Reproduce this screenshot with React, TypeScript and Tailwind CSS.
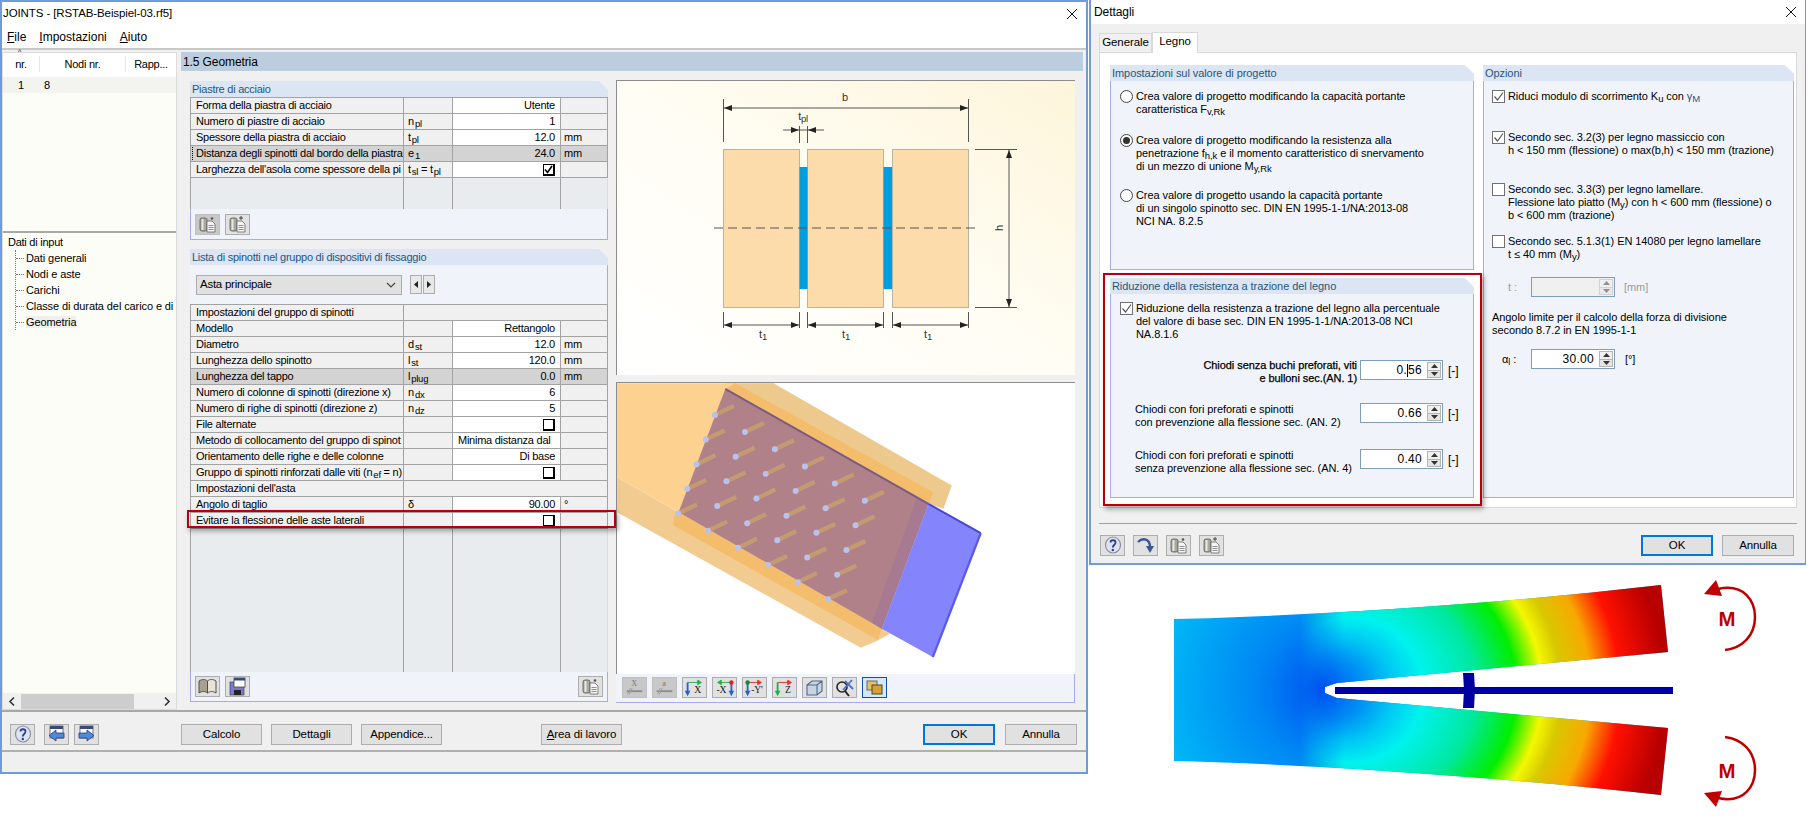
import type { ReactNode } from 'react'

type Row = {
  label: ReactNode
  sym?: ReactNode
  value?: ReactNode
  unit?: string
  kind?: 'section' | 'gray' | 'focus' | 'left'
}

const S = ({ b, s }: { b: string; s: string }) => (
  <span>
    {b}
    <span className="ml-[1px] text-[9.5px] relative top-[2px]">{s}</span>
  </span>
)

function Tick({ checked, soft }: { checked?: boolean; soft?: boolean }) {
  if (soft) {
    return (
      <span className="w-[13px] h-[13px] shrink-0 border border-[#707070] bg-white flex items-center justify-center">
        {checked && (
          <svg width="11" height="11" viewBox="0 0 11 11">
            <path d="M1.5 5.5 L4.5 9 L10 1.5" fill="none" stroke="#555" strokeWidth="1.2" />
          </svg>
        )}
      </span>
    )
  }
  return (
    <span className="w-[12px] h-[12px] border border-black border-r-2 border-b-2 bg-white flex items-center justify-center">
      {checked && (
        <svg width="9" height="9" viewBox="0 0 9 9">
          <path d="M1 4.5 L3.5 7.5 L8 1" fill="none" stroke="#000" strokeWidth="1.6" />
        </svg>
      )}
    </span>
  )
}

function Cylinder({ plus }: { plus?: boolean }) {
  return (
    <svg width="21" height="19" viewBox="0 0 21 19">
      <rect x="3" y="3" width="7" height="13" rx="2" fill="#a8a8a0" stroke="#555" strokeWidth="0.8" />
      <rect x="4.5" y="4" width="2" height="11" fill="#e8e8e0" />
      <path d="M10 6 h5 l3 3 v8 h-8 z" fill="#f4f4f4" stroke="#666" strokeWidth="0.8" />
      <path d="M11.5 10.5 h5 M11.5 12.5 h5 M11.5 14.5 h5" stroke="#777" strokeWidth="0.8" />
      {plus && <path d="M14 1 v4 M12 3 h4" stroke="#444" strokeWidth="1" />}
      {!plus && <circle cx="15" cy="3.5" r="1.3" fill="#555" />}
    </svg>
  )
}

function Help() {
  return (
    <svg width="21" height="19" viewBox="0 0 21 19">
      <ellipse cx="11" cy="9" rx="7.5" ry="8" fill="#dfe3f0" stroke="#8890a8" strokeWidth="1.2" />
      <path d="M8.5 6.5 C8.5 3.5 13.5 3.5 13.5 6.5 C13.5 9 10.8 9 10.8 11.5" fill="none" stroke="#2c3f90" strokeWidth="1.8" />
      <circle cx="10.8" cy="14" r="1.2" fill="#2c3f90" />
    </svg>
  )
}

function WinArrow({ right }: { right?: boolean }) {
  return (
    <svg width="21" height="19" viewBox="0 0 21 19">
      <rect x="4" y="1" width="13" height="12" fill="#fff" stroke="#555" strokeWidth="0.8" />
      <rect x="4" y="1" width="13" height="3" fill="#3a4a78" />
      {right ? (
        <path d="M3 8 h8 v-3 l7 5.5 -7 5.5 v-3 h-8 z" fill="#4d8bd8" stroke="#243c80" strokeWidth="0.8" />
      ) : (
        <path d="M18 8 h-8 v-3 l-7 5.5 7 5.5 v-3 h8 z" fill="#4d8bd8" stroke="#243c80" strokeWidth="0.8" />
      )}
    </svg>
  )
}

function Book() {
  return (
    <svg width="21" height="19" viewBox="0 0 21 19">
      <path d="M2 4 C5 2 8 2 10.5 4 V16 C8 14 5 14 2 16 z" fill="#a8a090" stroke="#444" strokeWidth="0.9" />
      <path d="M19 4 C16 2 13 2 10.5 4 V16 C13 14 16 14 19 16 z" fill="#e8e4d4" stroke="#444" strokeWidth="0.9" />
    </svg>
  )
}

function Floppy() {
  return (
    <svg width="21" height="19" viewBox="0 0 21 19">
      <rect x="3" y="5" width="14" height="13" fill="#7a78d0" stroke="#444" strokeWidth="0.7" />
      <rect x="7" y="13" width="7" height="5" fill="#222" />
      <rect x="7" y="1" width="11" height="9" fill="#fff" stroke="#444" strokeWidth="0.8" />
      <rect x="7" y="1" width="11" height="2.5" fill="#3a4a78" />
    </svg>
  )
}

function Curve() {
  return (
    <svg width="21" height="19" viewBox="0 0 21 19">
      <path d="M3 6 C8 1 15 3 15 11" fill="none" stroke="#3a5590" strokeWidth="2.4" />
      <path d="M11 10 L15 17 L19 10 z" fill="#3a5590" />
    </svg>
  )
}

function LetterBeam({ t }: { t: string }) {
  return (
    <svg width="25" height="21" viewBox="0 0 25 21">
      <text x="12" y="9" fontSize="9" textAnchor="middle" fontFamily="Liberation Serif, serif" fill="#777">
        {t}
      </text>
      <path d="M4 14.5 H21" stroke="#8c8c8c" strokeWidth="2" />
      <path d="M8 11 L5 18 M10 11 L7 18" stroke="#9c9c9c" strokeWidth="1" />
    </svg>
  )
}

function AxisIcon({
  label,
  labelX,
  horiz,
  horizColor,
  down,
  downColor,
  dot,
}: {
  label: string
  labelX: number
  horiz: string
  horizColor: string
  down: number
  downColor: string
  dot?: [number, string]
}) {
  return (
    <svg width="25" height="21" viewBox="0 0 25 21">
      <path d={horiz} fill={horizColor} stroke={horizColor} strokeWidth="1" />
      <path d={`M${down} 5 V15`} stroke={downColor} strokeWidth="2" />
      <path d={`M${down} 20 l-3 -6 h6 z`} fill={downColor} />
      {dot && <circle cx={dot[0]} cy="5" r="2.4" fill={dot[1]} />}
      <text x={labelX} y="17" fontSize="10.5" textAnchor="middle" fontFamily="Liberation Serif, serif" fill="#222">
        {label}
      </text>
    </svg>
  )
}

function IconBtn({
  children,
  off,
  active,
}: {
  children: ReactNode
  off?: boolean
  active?: boolean
}) {
  return (
    <span
      className={`w-[25px] h-[21px] shrink-0 flex items-center justify-center border ${
        active
          ? 'border-[#0a55a8] bg-[#d4e8f8]'
          : off
            ? 'border-[#c0c0c0] bg-[#c8c8c8]'
            : 'border-[#adadad] bg-[#e1e1e1]'
      }`}
    >
      {children}
    </span>
  )
}

function Btn({ children, w, active }: { children: ReactNode; w: string; active?: boolean }) {
  return (
    <span
      className={`${w} h-[21px] flex items-center justify-center bg-[#e1e1e1] text-[11.5px] tracking-[-0.1px] text-black ${
        active ? 'border-2 border-[#0078d7]' : 'border border-[#adadad]'
      }`}
    >
      {children}
    </span>
  )
}

function GroupHead({ title, narrow }: { title: string; narrow?: boolean }) {
  return (
    <div
      className={`h-4 shrink-0 bg-[#dbe5f4] text-[#28567a] flex items-center pl-[2px] [clip-path:polygon(0_0,calc(100%-9px)_0,100%_9px,100%_100%,0_100%)] ${
        narrow ? 'text-[11px] tracking-[-0.25px]' : 'text-[11px] tracking-[-0.07px]'
      }`}
    >
      {title}
    </div>
  )
}

const cols = 'grid grid-cols-[214px_49px_108px_47px]'
const line = 'border-r border-b border-[#a3a3a3]'

function TableRow({ row }: { row: Row }) {
  const rowBg =
    row.kind === 'gray' || row.kind === 'focus' ? 'bg-[#d3d3d3]' : 'bg-[#f0f0f0]'
  if (row.kind === 'section') {
    return (
      <div className={`${cols} h-4 bg-[#f0f0f0]`}>
        <div className={`${line} border-l pl-[5px] leading-[15px] whitespace-nowrap overflow-hidden`}>{row.label}</div>
        <div className={`${line} col-span-3`} />
      </div>
    )
  }
  return (
    <div className={`${cols} h-4 ${rowBg}`}>
      <div className={`${line} border-l pl-[5px] leading-[15px] whitespace-nowrap overflow-hidden`}>
        {row.kind === 'focus' ? (
          <span className="outline-1 outline-dotted outline-black -ml-[3px] pl-[3px] pr-[3px] block">{row.label}</span>
        ) : (
          row.label
        )}
      </div>
      <div className={`${line} pl-[4px] leading-[15px] whitespace-nowrap overflow-hidden`}>{row.sym}</div>
      <div
        className={`${line} leading-[15px] flex items-center ${
          row.kind === 'left' ? 'pl-[5px]' : 'justify-end pr-[5px]'
        } ${row.kind === 'gray' || row.kind === 'focus' ? '' : 'bg-white'}`}
      >
        {row.value}
      </div>
      <div className={`${line} pl-[3px] leading-[15px]`}>{row.unit}</div>
    </div>
  )
}

function EmptyRows() {
  return (
    <div className={`${cols} flex-1 bg-[#e9ecee]`}>
      <div className="border-l border-r border-[#a3a3a3]" />
      <div className="border-r border-[#a3a3a3]" />
      <div className="border-r border-[#a3a3a3]" />
      <div className="border-r border-[#dcdcdc]" />
    </div>
  )
}

const plateRows: Row[] = [
  { label: 'Forma della piastra di acciaio', value: 'Utente' },
  { label: 'Numero di piastre di acciaio', sym: <S b="n" s="pl" />, value: '1' },
  { label: 'Spessore della piastra di acciaio', sym: <S b="t" s="pl" />, value: '12.0', unit: 'mm' },
  { label: 'Distanza degli spinotti dal bordo della piastra', sym: <S b="e" s="1" />, value: '24.0', unit: 'mm', kind: 'focus' },
  {
    label: "Larghezza dell'asola come spessore della pi",
    sym: (
      <span>
        <S b="t" s="sl" /> = <S b="t" s="pl" />
      </span>
    ),
    value: <Tick checked />,
  },
]

const dowelRows: Row[] = [
  { label: 'Impostazioni del gruppo di spinotti', kind: 'section' },
  { label: 'Modello', value: 'Rettangolo' },
  { label: 'Diametro', sym: <S b="d" s="st" />, value: '12.0', unit: 'mm' },
  { label: 'Lunghezza dello spinotto', sym: <S b="l" s="st" />, value: '120.0', unit: 'mm' },
  { label: 'Lunghezza del tappo', sym: <S b="l" s="plug" />, value: '0.0', unit: 'mm', kind: 'gray' },
  { label: 'Numero di colonne di spinotti (direzione x)', sym: <S b="n" s="dx" />, value: '6' },
  { label: 'Numero di righe di spinotti (direzione z)', sym: <S b="n" s="dz" />, value: '5' },
  { label: 'File alternate', value: <Tick /> },
  { label: 'Metodo di collocamento del gruppo di spinot', value: 'Minima distanza dal', kind: 'left' },
  { label: 'Orientamento delle righe e delle colonne', value: 'Di base' },
  { label: <span>Gruppo di spinotti rinforzati dalle viti (<S b="n" s="ef" /> = n)</span>, value: <Tick /> },
  { label: "Impostazioni dell'asta", kind: 'section' },
  { label: 'Angolo di taglio', sym: 'δ', value: '90.00', unit: '°' },
  { label: 'Evitare la flessione delle aste laterali', value: <Tick /> },
]

function Sketch() {
  return (
    <svg width="458" height="294" viewBox="617 81 458 294" className="block">
      <g fill="#fddcab" stroke="#bdb3a2" strokeWidth="1">
        <rect x="723.5" y="149.5" width="76" height="158" />
        <rect x="807.5" y="149.5" width="76" height="158" />
        <rect x="892.5" y="149.5" width="76" height="158" />
      </g>
      <rect x="799.5" y="167" width="8" height="122" fill="#009ee0" />
      <rect x="883.5" y="167" width="8.5" height="122" fill="#009ee0" />
      <g stroke="#555" strokeWidth="1" fill="none">
        <path d="M714 228 H977" strokeDasharray="9 5" />
        <path d="M723.5 99 V142 M968.5 99 V142 M723.5 108 H968.5" />
        <path d="M799.5 126 V143 M807.5 126 V143 M783 130 H824" />
        <path d="M975 149.5 H1017 M975 307.5 H1017 M1009 149.5 V307.5" />
        <path d="M723.5 312 V328 M799.5 312 V328 M807.5 312 V328 M883.5 312 V328 M892.5 312 V328 M968.5 312 V328" />
        <path d="M723.5 325 H799.5 M807.5 325 H883.5 M892.5 325 H968.5" />
      </g>
      <g fill="#222">
        <path d="M724 108 l8 -3 v6 z M968 108 l-8 -3 v6 z" />
        <path d="M799 130 l-8 -3 v6 z M808 130 l8 -3 v6 z" />
        <path d="M1009 150 l-3 8 h6 z M1009 307 l-3 -8 h6 z" />
        <path d="M724 325 l8 -3 v6 z M799 325 l-8 -3 v6 z M808 325 l8 -3 v6 z M883 325 l-8 -3 v6 z M893 325 l8 -3 v6 z M968 325 l-8 -3 v6 z" />
      </g>
      <g fontFamily="Liberation Sans, sans-serif" fontSize="11" fill="#333" textAnchor="middle">
        <text x="845" y="101">b</text>
        <text x="803" y="120">t<tspan fontSize="9.5" dy="2">pl</tspan></text>
        <text x="763" y="338">t<tspan fontSize="9.5" dy="2">1</tspan></text>
        <text x="846" y="338">t<tspan fontSize="9.5" dy="2">1</tspan></text>
        <text x="928" y="338">t<tspan fontSize="9.5" dy="2">1</tspan></text>
        <text x="0" y="0" transform="translate(1003 228) rotate(-90)">h</text>
      </g>
    </svg>
  )
}

function Model3D() {
  const pins: [number, number][] = []
  for (let i = 0; i < 6; i++) {
    for (let j = 0; j < 5; j++) {
      pins.push([314 + i * 90 - j * 27.7, 133 + i * 51.5 + j * 74])
    }
  }
  return (
    <svg width="458" height="291" viewBox="20 38 1375 872" className="block">
      <path d="M345 38 H490 L1025 345 L1000 415 L955 400 Z" fill="#eec98e" />
      <path d="M20 320 L205 425 L815 775 L840 790 L800 812 L752 832 L20 425 Z" fill="#f1cb90" />
      <path d="M20 38 H375 L215 430 L20 320 Z" fill="#fdd290" />
      <path d="M190 440 L205 425 L815 775 L803 808 L190 465 Z" fill="#f3bd6c" />
      <path d="M345 55 L375 38 L970 365 L955 400 Z" fill="#f3bd6c" />
      <path d="M345 55 L955 400 L815 775 L205 425 Z" fill="#b08189" />
      <path d="M920 382 L955 400 L815 775 L785 757 Z" fill="#a87a92" />
      <path d="M955 400 L1112 488 L968 860 L815 775 Z" fill="#8484fc" />
      <path d="M345 55 L955 400" stroke="#7a5a82" strokeWidth="6" />
      <path d="M955 400 L1112 488" stroke="#4848d0" strokeWidth="6" />
      <path d="M1112 488 L968 860" stroke="#5a5ae4" strokeWidth="7" />
      {pins.map(([x, y]) => (
        <g key={`${x}-${y}`}>
          <path d={`M${x} ${y} l57 -27`} stroke="#c59a72" strokeWidth="13" />
          <circle cx={x} cy={y} r="9" fill="#b9c2ee" />
        </g>
      ))}
    </svg>
  )
}

function SpinBox({
  value,
  off,
  wide,
  caret,
}: {
  value?: ReactNode
  off?: boolean
  wide?: boolean
  caret?: boolean
}) {
  return (
    <span
      className={`${wide ? 'w-[84px]' : 'w-[83px]'} h-5 shrink-0 border border-[#7f9db9] flex items-center ${
        off ? 'bg-[#f0f0f0]' : 'bg-white'
      }`}
    >
      <span className="flex-1 text-right pr-[5px] text-[12px] tracking-[0.3px]">
        {caret ? (
          <>
            0.<span className="inline-block w-px h-[13px] bg-black align-middle" />56
          </>
        ) : (
          value
        )}
      </span>
      <span className={`w-[14px] h-[16px] mr-[1px] flex flex-col border border-[#b5b5b5] ${off ? 'opacity-50' : ''}`}>
        <span className="flex-1 flex items-center justify-center bg-[#f0f0f0]">
          <svg width="7" height="4" viewBox="0 0 7 4">
            <path d="M3.5 0 L7 4 H0 Z" fill="#333" />
          </svg>
        </span>
        <span className="flex-1 flex items-center justify-center bg-[#e4e4e4] border-t border-[#b5b5b5]">
          <svg width="7" height="4" viewBox="0 0 7 4">
            <path d="M3.5 4 L7 0 H0 Z" fill="#333" />
          </svg>
        </span>
      </span>
    </span>
  )
}

function Radio({ on }: { on?: boolean }) {
  return (
    <span className="w-[13px] h-[13px] rounded-full border border-[#444] bg-white shrink-0 flex items-center justify-center">
      {on && <span className="w-[7px] h-[7px] rounded-full bg-[#333]" />}
    </span>
  )
}

function RadioOption({ on, children, cls }: { on?: boolean; children: ReactNode; cls?: string }) {
  return (
    <div className={`flex gap-[3px] ${cls ?? ''}`}>
      <Radio on={on} />
      <div className="leading-[13px] whitespace-nowrap">{children}</div>
    </div>
  )
}

function CheckOption({ on, children, cls }: { on?: boolean; children: ReactNode; cls?: string }) {
  return (
    <div className={`flex gap-[3px] ${cls ?? ''}`}>
      <Tick soft checked={on} />
      <div className="leading-[13px] whitespace-nowrap">{children}</div>
    </div>
  )
}

function SpinRow({
  label,
  value,
  right,
  cls,
  caret,
}: {
  label: ReactNode
  value?: string
  right?: boolean
  cls: string
  caret?: boolean
}) {
  return (
    <div className={`flex items-start pl-[24px] ${cls}`}>
      <div className={`w-[222px] leading-[13px] whitespace-nowrap ${right ? 'text-right mt-[-1px] [-webkit-text-stroke:0.25px_black]' : ''}`}>
        {label}
      </div>
      <span className="ml-[3px]">
        <SpinBox value={value} caret={caret} />
      </span>
      <span className="ml-[5px] mt-[2px] text-[12px]">[-]</span>
    </div>
  )
}

function Details() {
  return (
    <div className="w-[717px] h-[565px] ml-[1px] flex flex-col bg-[#f0f0f0] border-l-2 border-b-2 border-r border-[#6f9bd8] text-[11px] tracking-[-0.07px] text-black">
      <div className="h-6 shrink-0 bg-white pl-[3px] pr-[9px] flex items-center justify-between text-[12px]">
        Dettagli
        <svg width="10" height="10" viewBox="0 0 10 10">
          <path d="M0 0 L10 10 M10 0 L0 10" stroke="#111" strokeWidth="1" />
        </svg>
      </div>
      <div className="flex px-[8px] pt-[8px] text-[11.5px] leading-none">
        <span className="w-[53px] h-[19px] mt-[1px] bg-[#f0f0f0] border border-b-0 border-[#d9d9d9] flex items-center justify-center">Generale</span>
        <span className="w-[46px] h-[21px] -mb-px z-10 bg-white border border-b-0 border-[#d9d9d9] flex items-center justify-center pb-[3px]">Legno</span>
      </div>
      <div className="mx-[8px] h-[456px] bg-white border border-[#d9d9d9] pt-[12px] pl-[10px] flex gap-[9px]">
        <div className="w-[364px] flex flex-col gap-[8px]">
          <div className="h-[205px] flex flex-col">
            <GroupHead title="Impostazioni sul valore di progetto" />
            <div className="flex-1 bg-[#f0f4fa] border-r border-b border-l border-[#a9a9ee] pt-[9px] pl-[9px]">
              <RadioOption>
                Crea valore di progetto modificando la capacità portante
                <br />
                caratteristica F<sub className="text-[9.5px]">v,Rk</sub>
              </RadioOption>
              <RadioOption on cls="mt-[18px]">
                Crea valore di progetto modificando la resistenza alla
                <br />
                penetrazione f<sub className="text-[9.5px]">h,k</sub> e il momento caratteristico di snervamento
                <br />
                di un mezzo di unione M<sub className="text-[9.5px]">y,Rk</sub>
              </RadioOption>
              <RadioOption cls="mt-[16px]">
                Crea valore di progetto usando la capacità portante
                <br />
                di un singolo spinotto sec. DIN EN 1995-1-1/NA:2013-08
                <br />
                NCI NA. 8.2.5
              </RadioOption>
            </div>
          </div>
          <div className="h-[220px] flex flex-col relative">
            <GroupHead title="Riduzione della resistenza a trazione del legno" />
            <div className="flex-1 bg-[#f0f4fa] border-r border-b border-l border-[#a9a9ee] pt-[8px] pl-[9px]">
              <CheckOption on>
                Riduzione della resistenza a trazione del legno alla percentuale
                <br />
                del valore di base sec. DIN EN 1995-1-1/NA:2013-08 NCI
                <br />
                NA.8.1.6
              </CheckOption>
              <SpinRow
                right
                caret
                cls="mt-[19px] -ml-[9px]"
                label={
                  <>
                    Chiodi senza buchi preforati, viti
                    <br />e bulloni sec.(AN. 1)
                  </>
                }
              />
              <SpinRow
                cls="mt-[18px] -ml-[9px]"
                value="0.66"
                label={
                  <>
                    Chiodi con fori preforati e spinotti
                    <br />
                    con prevenzione alla flessione sec. (AN. 2)
                  </>
                }
              />
              <SpinRow
                cls="mt-[20px] -ml-[9px]"
                value="0.40"
                label={
                  <>
                    Chiodi con fori preforati e spinotti
                    <br />
                    senza prevenzione alla flessione sec. (AN. 4)
                  </>
                }
              />
            </div>
            <div className="absolute -left-[7px] -top-[5px] w-[379px] h-[233px] border-2 border-[#b8000c] shadow-[2px_3px_5px_rgba(0,0,0,0.35)]" />
          </div>
        </div>
        <div className="w-[311px] h-[433px] flex flex-col">
          <GroupHead title="Opzioni" />
          <div className="flex-1 bg-[#f0f4fa] border-r border-b border-l border-[#a9a9ee] pt-[9px] pl-[8px]">
            <CheckOption on>
              Riduci modulo di scorrimento K<sub className="text-[9.5px]">u</sub> con <span className="text-[#28567a]">γ</span>
              <sub className="text-[9.5px] text-[#28567a]">M</sub>
            </CheckOption>
            <CheckOption on cls="mt-[28px]">
              Secondo sec. 3.2(3) per legno massiccio con
              <br />h &lt; 150 mm (flessione) o max(b,h) &lt; 150 mm (trazione)
            </CheckOption>
            <CheckOption cls="mt-[26px]">
              Secondo sec. 3.3(3) per legno lamellare.
              <br />
              Flessione lato piatto (M<sub className="text-[9.5px]">y</sub>) con h &lt; 600 mm (flessione) o
              <br />b &lt; 600 mm (trazione)
            </CheckOption>
            <CheckOption cls="mt-[13px]">
              Secondo sec. 5.1.3(1) EN 14080 per legno lamellare
              <br />t ≤ 40 mm (M<sub className="text-[9.5px]">y</sub>)
            </CheckOption>
            <div className="flex items-center mt-[16px] text-[#9a9a9a]">
              <span className="w-[39px] pl-[16px]">t :</span>
              <SpinBox off wide />
              <span className="ml-[9px]">[mm]</span>
            </div>
            <div className="mt-[14px] leading-[13px]">
              Angolo limite per il calcolo della forza di divisione
              <br />
              secondo 8.7.2 in EN 1995-1-1
            </div>
            <div className="flex items-center mt-[12px]">
              <span className="w-[39px] pl-[10px]">
                α<sub className="text-[9px]">l</sub> :
              </span>
              <SpinBox wide value="30.00" />
              <span className="ml-[10px]">[°]</span>
            </div>
          </div>
        </div>
      </div>
      <div className="mx-[8px] mt-[15px] border-t border-[#a0a0a0] pt-[11px] flex items-center">
        <div className="flex gap-[8px] ml-[1px]">
          <IconBtn><Help /></IconBtn>
          <IconBtn><Curve /></IconBtn>
          <IconBtn><Cylinder /></IconBtn>
          <IconBtn><Cylinder plus /></IconBtn>
        </div>
        <div className="ml-auto flex gap-[9px] mr-[3px]">
          <Btn w="w-[72px]" active>OK</Btn>
          <Btn w="w-[72px]">Annulla</Btn>
        </div>
      </div>
    </div>
  )
}

const wedge =
  'M1174 619 C1300 616 1480 606 1661 585 L1668 652 L1337 683 L1325 687 V693 L1337 698 L1668 728 L1661 795 C1480 775 1300 764 1174 761 Z'

function Chart() {
  return (
    <svg width="722" height="265" viewBox="1088 565 722 265" className="block">
      <defs>
        {/* focal gradient gives the curved bands around the notch */}
        <radialGradient id="field" gradientUnits="userSpaceOnUse" cx="1431" cy="690" r="260" fx="1319" fy="690">
          <stop offset="0" stopColor="#0050f0" />
          <stop offset="0.12" stopColor="#0090f4" />
          <stop offset="0.2" stopColor="#00c8f4" />
          <stop offset="0.28" stopColor="#00f2ee" />
          <stop offset="0.42" stopColor="#00e8a0" />
          <stop offset="0.53" stopColor="#00ee00" />
          <stop offset="0.6" stopColor="#f4f800" />
          <stop offset="0.65" stopColor="#d8c800" />
          <stop offset="0.73" stopColor="#f8a800" />
          <stop offset="0.81" stopColor="#ff1000" />
          <stop offset="0.93" stopColor="#b80000" />
          <stop offset="1" stopColor="#b80000" />
        </radialGradient>
        <radialGradient id="core" gradientUnits="userSpaceOnUse" cx="1325" cy="690" r="175">
          <stop offset="0" stopColor="#0050f0" />
          <stop offset="0.4" stopColor="#0088f4" />
          <stop offset="1" stopColor="#00bcf6" />
        </radialGradient>
        <linearGradient id="fade" gradientUnits="userSpaceOnUse" x1="1300" y1="0" x2="1345" y2="0">
          <stop offset="0" stopColor="#000" />
          <stop offset="1" stopColor="#fff" />
        </linearGradient>
        <mask id="rightPart" maskUnits="userSpaceOnUse" x="1088" y="565" width="722" height="265">
          <rect x="1088" y="565" width="722" height="265" fill="url(#fade)" />
        </mask>
      </defs>
      <path d={wedge} fill="url(#core)" />
      <path d={wedge} fill="url(#field)" mask="url(#rightPart)" />
      <path d="M1335 690.5 H1673" stroke="#0000a0" strokeWidth="7" />
      <path d="M1463 673 h11 l1 17 -1 18 h-11 l1 -18 z" fill="#0000a0" />
      <g fill="none" stroke="#c00000" strokeWidth="2.5">
        <path d="M1718 589 C1745 583 1755 602 1755 617 C1755 636 1742 648 1725 650" />
        <path d="M1725 737 C1742 739 1755 751 1755 770 C1755 785 1745 804 1718 798" />
      </g>
      <path d="M1704 594 L1716 580 L1722 596 Z" fill="#c00000" />
      <path d="M1704 793 L1722 791 L1716 807 Z" fill="#c00000" />
      <g fontFamily="Liberation Sans, sans-serif" fontSize="20" fontWeight="700" fill="#c00000" textAnchor="middle">
        <text x="1727" y="626" textLength="17" lengthAdjust="spacingAndGlyphs">M</text>
        <text x="1727" y="778" textLength="17" lengthAdjust="spacingAndGlyphs">M</text>
      </g>
    </svg>
  )
}

export default function App() {
  return (
    <div className="w-[1810px] h-[830px] bg-white overflow-hidden flex font-['Liberation_Sans',Arial,sans-serif] text-black">
      <div className="w-[1088px] h-[774px] flex flex-col shrink-0 border-t-2 border-l-2 border-r-2 border-b-2 border-[#6f9bd8]">
        <div className="h-[23px] shrink-0 flex items-center justify-between pl-[1px] pr-[9px] text-[11.5px] tracking-[-0.1px]">
          <span>JOINTS - [RSTAB-Beispiel-03.rf5]</span>
          <svg width="10" height="10" viewBox="0 0 10 10">
            <path d="M0 0 L10 10 M10 0 L0 10" stroke="#111" strokeWidth="1" />
          </svg>
        </div>
        <div className="h-[23px] shrink-0 flex items-center pl-[5px] gap-[13px] text-[12px]">
          <span><u>F</u>ile</span>
          <span><u>I</u>mpostazioni</span>
          <span><u>A</u>iuto</span>
        </div>
        <div className="flex-1 flex flex-col bg-[#f0f0f0] border-t-2 border-[#c8c8c8] text-[11px] tracking-[-0.25px]">
          <div className="h-[662px] shrink-0 flex gap-[4px] pt-[2px] border-b-2 border-[#a8a8a8]">
            <div className="w-[175px] flex flex-col border border-[#dcdcdc] bg-[#fdfdf7]">
              <div className="h-[180px] shrink-0 border-b-2 border-[#a8a8a8]">
                <div className="h-[24px] pb-[2px] flex bg-white items-center text-center">
                  <span className="w-[36px] relative">
                    <span className="absolute -top-[8px] left-[15px] text-[7px] leading-none">^</span>
                    nr.
                  </span>
                  <span className="w-[86px] border-l border-[#e6e6e6]">Nodi nr.</span>
                  <span className="flex-1 border-l border-[#e6e6e6]">Rapp...</span>
                </div>
                <div className="h-[16px] flex bg-[#f3f3ef] items-center">
                  <span className="w-[36px] text-center">1</span>
                  <span className="pl-[5px]">8</span>
                </div>
              </div>
              <div className="flex-1 pl-[5px] pt-[1px] relative">
                <div className="leading-[16px]">Dati di input</div>
                <div className="ml-[7px] pl-[10px] border-l border-dotted border-[#777] tracking-[-0.1px]">
                  {['Dati generali', 'Nodi e aste', 'Carichi', 'Classe di durata del carico e di', 'Geometria'].map((t) => (
                    <div key={t} className="h-4 leading-[16px] whitespace-nowrap relative">
                      <span className="absolute -left-[10px] top-[8px] w-[8px] border-t border-dotted border-[#777]" />
                      <span className={t === 'Geometria' ? 'bg-[#efefef]' : ''}>{t}</span>
                    </div>
                  ))}
                </div>
              </div>
              <div className="h-[16px] flex items-center bg-[#f0f0f0] text-[#333]">
                <svg width="18" height="15" viewBox="0 0 18 15">
                  <path d="M11 3.5 L7 7.5 L11 11.5" fill="none" stroke="#333" strokeWidth="1.6" />
                </svg>
                <span className="w-[113px] h-[15px] bg-[#cdcdcd]" />
                <span className="flex-1" />
                <svg width="18" height="15" viewBox="0 0 18 15">
                  <path d="M7 3.5 L11 7.5 L7 11.5" fill="none" stroke="#333" strokeWidth="1.6" />
                </svg>
              </div>
            </div>
            <div className="w-[902px] flex flex-col">
              <div className="h-[19px] shrink-0 bg-[#bccddd] flex items-center pl-[2px] text-[12px] tracking-[-0.1px]">1.5 Geometria</div>
              <div className="flex pl-[9px] pt-[9px] gap-[8px]">
                <div className="w-[418px] flex flex-col gap-[9px] pt-[1px]">
                  <div className="h-[159px] flex flex-col">
                    <GroupHead title="Piastre di acciaio" narrow />
                    <div className="border-t border-[#a3a3a3]">
                      {plateRows.map((r, i) => (
                        <TableRow key={i} row={r} />
                      ))}
                    </div>
                    <EmptyRows />
                    <div className="h-[31px] shrink-0 flex gap-[5px] pl-[4px] pt-[5px] bg-[#f0f4fa] border-b border-r border-l border-[#a9a9ee]">
                      <IconBtn off><Cylinder /></IconBtn>
                      <IconBtn><Cylinder plus /></IconBtn>
                    </div>
                  </div>
                  <div className="h-[453px] flex flex-col relative">
                    <GroupHead title="Lista di spinotti nel gruppo di dispositivi di fissaggio" narrow />
                    <div className="h-[39px] shrink-0 bg-[#f0f4fa] border-r border-[#a9a9ee] flex items-start pt-[10px] pl-[6px]">
                      <span className="w-[206px] h-[20px] bg-[#e1e1e1] border border-[#adadad] flex items-center justify-between pl-[3px] pr-[5px] text-[11.5px]">
                        Asta principale
                        <svg width="10" height="6" viewBox="0 0 10 6">
                          <path d="M1 1 L5 5 L9 1" fill="none" stroke="#444" strokeWidth="1.2" />
                        </svg>
                      </span>
                      <span className="ml-[8px] w-[12px] h-[19px] bg-[#e8e8e8] border border-[#adadad] flex items-center justify-center">
                        <svg width="4" height="7" viewBox="0 0 4 7">
                          <path d="M4 0 V7 L0 3.5 Z" fill="#222" />
                        </svg>
                      </span>
                      <span className="ml-[1px] w-[12px] h-[19px] bg-[#e8e8e8] border border-[#adadad] flex items-center justify-center">
                        <svg width="4" height="7" viewBox="0 0 4 7">
                          <path d="M0 0 V7 L4 3.5 Z" fill="#222" />
                        </svg>
                      </span>
                    </div>
                    <div className="border-t border-[#a3a3a3]">
                      {dowelRows.map((r, i) => (
                        <TableRow key={i} row={r} />
                      ))}
                    </div>
                    <EmptyRows />
                    <div className="h-[30px] shrink-0 flex gap-[5px] pl-[4px] pr-[4px] pt-[4px] bg-[#f0f4fa] border-b border-r border-l border-[#a9a9ee]">
                      <IconBtn><Book /></IconBtn>
                      <IconBtn><Floppy /></IconBtn>
                      <span className="ml-auto">
                        <IconBtn><Cylinder /></IconBtn>
                      </span>
                    </div>
                    <div className="absolute -left-[3px] -right-[8px] top-[261px] h-[18px] border-2 border-[#b8000c] shadow-[2px_3px_5px_rgba(0,0,0,0.35)]" />
                  </div>
                </div>
                <div className="w-[459px] flex flex-col">
                  <div className="h-[295px] border-t border-l border-[#8c8c8c] bg-linear-to-tr from-white via-[#fffdf4] to-[#fdf5da]">
                    <Sketch />
                  </div>
                  <div className="h-[292px] mt-[7px] border-t border-l border-[#8c8c8c] bg-white">
                    <Model3D />
                  </div>
                  <div className="h-[29px] bg-[#f0f4fa] border-b border-r border-[#a9a9ee] flex gap-[5px] pl-[6px] pt-[3px]">
                    <IconBtn off><LetterBeam t="X" /></IconBtn>
                    <IconBtn off><LetterBeam t="a" /></IconBtn>
                    <IconBtn><AxisIcon label="X" labelX={16} horiz="M5 5 H18 M20 5 l-4 -2.5 v5 z" horizColor="#22b04c" down={5} downColor="#2a60c8" /></IconBtn>
                    <IconBtn><AxisIcon label="-X" labelX={9} horiz="M20 5 H7 M5 5 l4 -2.5 v5 z" horizColor="#22b04c" down={20} downColor="#2a60c8" dot={[20, '#e02020']} /></IconBtn>
                    <IconBtn><AxisIcon label="-Y'" labelX={15} horiz="M5 5 H18 M20 5 l-4 -2.5 v5 z" horizColor="#e03030" down={5} downColor="#2a60c8" dot={[5, '#128a38']} /></IconBtn>
                    <IconBtn><AxisIcon label="Z" labelX={16} horiz="M5 5 H18 M20 5 l-4 -2.5 v5 z" horizColor="#e03030" down={5} downColor="#22b04c" /></IconBtn>
                    <IconBtn>
                      <svg width="21" height="19" viewBox="0 0 21 19">
                        <path d="M3 7 L8 3 H18 V13 L13 17 H3 Z M3 7 H13 V17 M13 7 L18 3" fill="#c8d4e0" stroke="#50688c" strokeWidth="1.1" />
                      </svg>
                    </IconBtn>
                    <IconBtn>
                      <svg width="21" height="19" viewBox="0 0 21 19">
                        <circle cx="8" cy="9" r="5" fill="none" stroke="#222" strokeWidth="1.6" />
                        <path d="M11 13 L15 18" stroke="#222" strokeWidth="2" />
                        <path d="M9 12 L18 2 M11 3 L19 11" stroke="#4a6ed8" strokeWidth="1.8" />
                      </svg>
                    </IconBtn>
                    <IconBtn active>
                      <svg width="21" height="19" viewBox="0 0 21 19">
                        <rect x="3" y="3" width="10" height="9" fill="#e8c060" stroke="#666" />
                        <rect x="8" y="7" width="10" height="9" fill="#d8a030" stroke="#444" />
                      </svg>
                    </IconBtn>
                  </div>
                </div>
              </div>
            </div>
          </div>
          <div className="h-[40px] shrink-0 flex items-start pt-[12px] pl-[8px] border-b-2 border-[#b0b0b0]">
            <div className="flex gap-[5px]">
              <IconBtn><Help /></IconBtn>
              <span className="ml-[4px]"><IconBtn><WinArrow /></IconBtn></span>
              <IconBtn><WinArrow right /></IconBtn>
            </div>
            <div className="ml-[82px] flex gap-[9px]">
              <Btn w="w-[81px]">Calcolo</Btn>
              <Btn w="w-[81px]">Dettagli</Btn>
              <Btn w="w-[81px]">Appendice...</Btn>
            </div>
            <span className="ml-[99px]">
              <Btn w="w-[81px]"><span><u>A</u>rea di lavoro</span></Btn>
            </span>
            <span className="ml-[301px]">
              <Btn w="w-[72px]" active>OK</Btn>
            </span>
            <span className="ml-[10px]">
              <Btn w="w-[72px]">Annulla</Btn>
            </span>
          </div>
        </div>
      </div>
      <div className="flex-1 flex flex-col">
        <Details />
        <Chart />
      </div>
    </div>
  )
}
